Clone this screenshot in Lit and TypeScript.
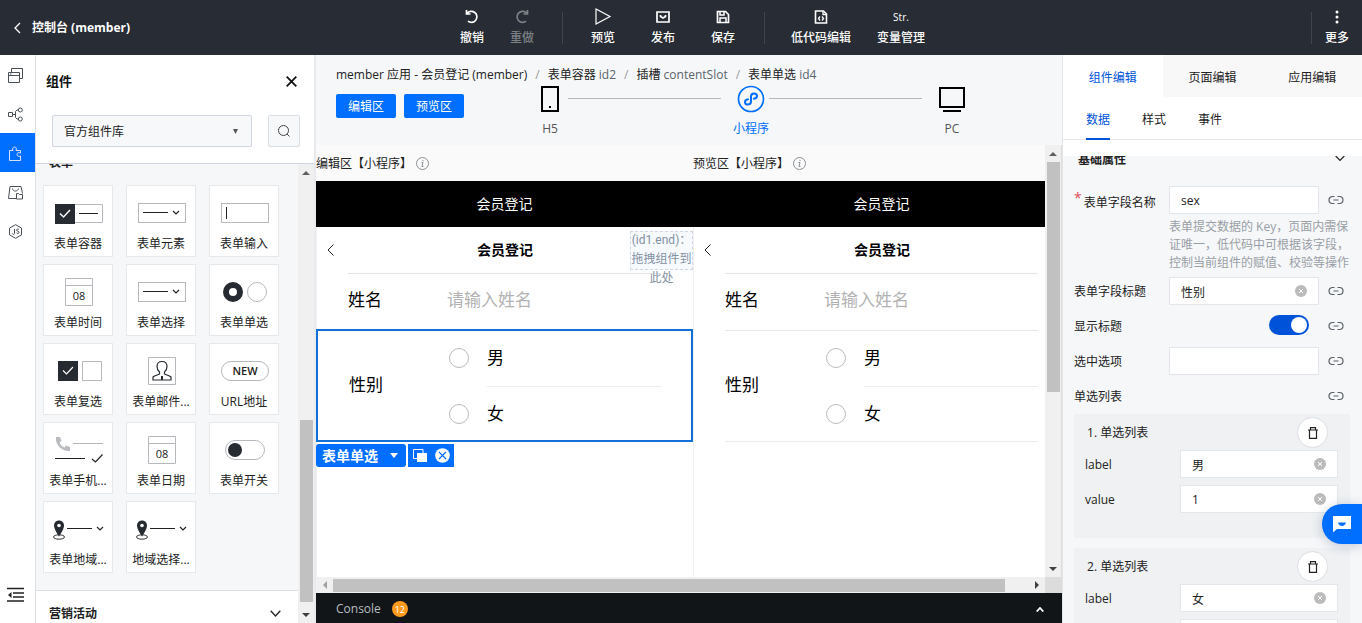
import { LitElement, html, svg, css, nothing } from "lit";
import { customElement, property } from "lit/decorators.js";
import { classMap } from "lit/directives/class-map.js";

const base = css`
  *,
  *::before,
  *::after {
    box-sizing: border-box;
  }
  button,
  input,
  select {
    font: inherit;
    color: inherit;
    margin: 0;
    padding: 0;
    border: 0;
    background: none;
    border-radius: 0;
    outline: 0;
  }
  a {
    color: inherit;
    text-decoration: none;
  }
  svg {
    display: block;
    flex: none;
  }
  h2,
  h3,
  p {
    margin: 0;
    font-size: inherit;
  }
`;

/* ---------- scroll track ---------- */

@customElement("scroll-track")
class ScrollTrack extends LitElement {
  @property() axis = "y";
  @property({ type: Number }) before = 0;
  @property({ type: Number }) thumb = 1;
  @property({ type: Number }) after = 0;

  static styles = css`
    :host {
      display: flex;
      background: #f0f0f0;
      flex-direction: column;
      width: 16px;
    }
    :host([axis="x"]) {
      flex-direction: row;
      width: auto;
      height: 16px;
    }
    .end {
      flex: 0 0 17px;
      display: grid;
      place-items: center;
    }
    .thumb {
      background: #c1c1c1;
      margin: 0 1px 0 2px;
    }
    :host([axis="x"]) .thumb {
      margin: 2px 0 1px;
    }
    svg {
      display: block;
    }
  `;

  render() {
    const y = this.axis === "y";
    return html`
      <div class="end">
        <svg width="8" height="8" fill=${y ? "#606060" : "#a0a0a0"}>
          <path d=${y ? "M0 6 4 2 8 6z" : "M6 0 2 4 6 8z"} />
        </svg>
      </div>
      <div style="flex:${this.before} 0 0"></div>
      <div class="thumb" style="flex:${this.thumb} 0 0"></div>
      <div style="flex:${this.after} 0 0"></div>
      <div class="end">
        <svg width="8" height="8" fill="#404040">
          <path d=${y ? "M0 2 4 6 8 2z" : "M2 0 6 4 2 8z"} />
        </svg>
      </div>
    `;
  }
}

/* ---------- top bar ---------- */

const line = (body: unknown, size = 16, width = 2) => html`
  <svg width=${size} height=${size} viewBox="0 0 ${size} ${size}" fill="none" stroke="currentColor" stroke-width=${width}>
    ${body}
  </svg>
`;

const undo = svg`<path d="M2.500 1v4h4M3 4.600A5.500 5.500 0 1 1 4 12.200" />`;
const redo = svg`<path d="M13.500 1v4h-4M13 4.600A5.500 5.500 0 1 0 12 12.200" />`;
const play = svg`<path d="M2 1v15l14-7.500z" />`;
const publish = svg`<path d="M2 3h12v10H2z" /><path d="M5.500 6v1.500L8 9l2.500-1.500V6" />`;
const save = svg`<path d="M2.500 2.500h8l3 3v8h-11z" /><path d="M5 2.500v3.500h4V2.500M5 13V9h6v4" stroke-width="1.500" />`;
const code = svg`<path d="M2.500 2h8l3 3v9h-11z" /><path d="M10 2v3.500h3.500M7 7.500 5.500 9.500 7 11.500M9 7.500l1.500 2L9 11.500" stroke-width="1.300" />`;

@customElement("top-bar")
class TopBar extends LitElement {
  static styles = [
    base,
    css`
      :host {
        display: flex;
        align-items: center;
        height: 55px;
        flex: none;
        background: #282c34;
        color: #fff;
      }
      .back {
        flex: 0 0 447px;
        display: flex;
        align-items: center;
        gap: 8px;
        padding-left: 12px;
        font-weight: 700;
      }
      .group {
        display: flex;
        align-items: center;
      }
      .tool {
        display: flex;
        flex-direction: column;
        align-items: center;
        gap: 3px;
        width: 60px;
        font-weight: 500;
        line-height: 18px;
      }
      .tool.slim {
        width: 50px;
      }
      .tool.wide {
        width: 80px;
      }
      .tool:disabled {
        color: #7d8085;
      }
      .icon {
        display: grid;
        place-items: center;
        height: 18px;
        font-size: 10px;
      }
      .rule {
        width: 1px;
        height: 32px;
        background: #40454d;
        margin: 0 10px 0 15px;
      }
      .rule.tail {
        margin: 0 16px 0 11px;
      }
      .more {
        margin-left: auto;
      }
      .more .rule {
        margin: 0;
      }
      .more .tool {
        width: 50px;
      }
    `,
  ];

  tool(icon: unknown, label: string, kind = "", disabled = false) {
    return html`
      <button class=${classMap({ tool: true, slim: kind === "slim", wide: kind === "wide" })} ?disabled=${disabled}>
        <span class="icon">${icon}</span><span>${label}</span>
      </button>
    `;
  }

  render() {
    return html`
      <a class="back" href="#">
        <svg width="12" height="12" fill="none" stroke="currentColor" stroke-width="1.300"><path d="M8 1 3 6l5 5" /></svg>
        控制台 (member)
      </a>
      <div class="group">
        ${this.tool(line(undo, 16, 1.7), "撤销", "slim")} ${this.tool(line(redo, 16, 1.7), "重做", "slim", true)}
        <span class="rule"></span>
        ${this.tool(line(play, 18, 1.2), "预览")} ${this.tool(line(publish, 16, 1.7), "发布")} ${this.tool(line(save, 16, 1.7), "保存")}
        <span class="rule tail"></span>
        ${this.tool(line(code, 16, 1.6), "低代码编辑", "wide")} ${this.tool("Str.", "变量管理", "wide")}
      </div>
      <div class="group more">
        <span class="rule"></span>
        ${this.tool(
          html`<svg width="4" height="14" fill="currentColor">
            <circle cx="2" cy="2" r="1.500" /><circle cx="2" cy="7" r="1.500" /><circle cx="2" cy="12" r="1.500" />
          </svg>`,
          "更多"
        )}
      </div>
    `;
  }
}

/* ---------- left rail ---------- */

const railIcons = [
  { name: "页面", art: svg`<path d="M.5 4.500h11v10H.5zM.5 7.500h11M3.500 4V.5h11v10H12M2 6h1.500" />` },
  { name: "流程", art: svg`<path d="M.5 5.500h4v4h-4zM4.500 7.500h3M10 3H9L7.500 4.500v6L9 12h1" /><circle cx="12.300" cy="3" r="2" /><circle cx="12.300" cy="12" r="2" />` },
  { name: "组件", art: svg`<path d="M1.500 4.500H5c-1-2 0-3.500 1.500-3.500S9 2.500 8 4.500h4.500V7c-2-1-3.500 0-3.500 1.500s1.500 2.500 3.500 1.500v4.500h-11z" />` },
  { name: "素材", art: svg`<path d="M2 1.500h11l1.500 7M2 1.500.5 13.500h8M4.500 3.500C5 7 9.500 7 10.500 3.500M8.500 8.500h2l1 1h3v4.500h-6z" />` },
  { name: "脚本", art: svg`<path d="M7.500.7l6 3.400v6.800l-6 3.400-6-3.400V4.100z" /><path d="M6.500 5v4.500c0 1.200-2 1.200-2.200 0M11 5.800c-.6-1.100-2.500-.9-2.500.3 0 1.400 2.600.8 2.600 2.300 0 1.300-2.200 1.400-2.700.2" />` },
];

@customElement("side-rail")
class SideRail extends LitElement {
  static styles = [
    base,
    css`
      :host {
        display: flex;
        flex-direction: column;
        width: 36px;
        flex: none;
        background: #fff;
        border-right: 1px solid #dcdfe3;
      }
      .item {
        display: flex;
        justify-content: center;
        height: 39px;
        padding: 13px 4px 0 0;
        color: #4a5058;
      }
      .item.active {
        background: #006eff;
        color: #cfe3ff;
      }
      .fold {
        margin-top: auto;
        padding: 0 4px 20px 0;
        display: flex;
        justify-content: center;
      }
    `,
  ];

  render() {
    return html`
      ${railIcons.map(
        (it, i) => html`
          <button class=${classMap({ item: true, active: i === 2 })} aria-label=${it.name}>${line(it.art, 15, 1)}</button>
        `
      )}
      <button class="fold" aria-label="收起">
        <svg width="17" height="16" stroke="#222" stroke-width="1.600" fill="none">
          <path d="M0 1.500h17M6 6h11M6 10h11M0 14h17" />
          <path d="M4.500 5v6L1 8z" fill="#222" stroke="none" />
        </svg>
      </button>
    `;
  }
}

/* ---------- component library ---------- */

const chevron = (x: number, y: number) =>
  svg`<path d="M${x - 3} ${y - 2}l3 3 3-3" fill="none" stroke="#222" stroke-width="1.200" />`;

const dropdown = svg`
  <rect x="3.500" y="6.500" width="47" height="19" fill="#fff" stroke="#b5b8bc" />
  <path d="M8 15.500h25" stroke="#222" />${chevron(41, 16)}`;

const calendar = svg`
  <path d="M13.500 2.500h27v27h-27zM13.500 9.500h27" fill="none" stroke="#b5b8bc" />
  <text x="27" y="24" text-anchor="middle" font-size="11" fill="#222">08</text>`;

const pin = svg`
  <ellipse cx="7" cy="24" rx="5.500" ry="2.200" fill="none" stroke="#333" />
  <path d="M7 7.500c-3 0-5 2.200-5 5C2 16.500 7 23.500 7 23.500s5-7 5-11c0-2.800-2-5-5-5z" fill="#262a31" />
  <circle cx="7" cy="12.500" r="1.800" fill="#fff" />
  <path d="M15 15.500h25" stroke="#222" />${chevron(48, 16)}`;

const cards = [
  {
    label: "表单容器",
    art: svg`<path d="M23 7.500h27.500v18H23" fill="none" stroke="#b5b8bc" /><path d="M3 7h20v20H3z" fill="#262a31" />
      <path d="M8 16.500l3.500 3.500 6.500-7" fill="none" stroke="#fff" stroke-width="1.400" /><path d="M27 16.500h19" stroke="#222" />`,
  },
  { label: "表单元素", art: dropdown },
  {
    label: "表单输入",
    art: svg`<rect x="3.500" y="6.500" width="47" height="19" fill="#fff" stroke="#b5b8bc" /><path d="M8.500 10v12" stroke="#222" />`,
  },
  { label: "表单时间", art: calendar },
  { label: "表单选择", art: dropdown },
  {
    label: "表单单选",
    art: svg`<circle cx="15" cy="16" r="7" fill="#fff" stroke="#262a31" stroke-width="6" /><circle cx="39" cy="16" r="9.500" fill="#fff" stroke="#b5b8bc" />`,
  },
  {
    label: "表单复选",
    art: svg`<path d="M6 6h20v20H6z" fill="#262a31" /><path d="M11 15.500l3.500 3.500 6.500-7" fill="none" stroke="#fff" stroke-width="1.200" />
      <path d="M30.500 6.500h19v19h-19z" fill="#fff" stroke="#b5b8bc" />`,
  },
  {
    label: "表单邮件...",
    art: svg`<path d="M13.500 2.500h27v27h-27z" fill="#fff" stroke="#b5b8bc" />
      <path d="M27 6.500c-3 0-5 2-5 5 0 2.500 1 4.300 2.500 5.500v2c-2 1-5 1.500-6.500 3v3h18v-3c-1.500-1.500-4.500-2-6.500-3v-2c1.500-1.200 2.500-3 2.500-5.500 0-3-2-5-5-5z" fill="none" stroke="#262a31" stroke-width="1.200" />
      <path d="M27 21v4" stroke="#262a31" stroke-width="2" />`,
  },
  {
    label: "URL地址",
    art: svg`<rect x="3.500" y="6.500" width="47" height="19" rx="9.500" fill="#fff" stroke="#b5b8bc" />
      <text x="27" y="20" text-anchor="middle" font-size="11" font-weight="600" fill="#222">NEW</text>`,
  },
  {
    label: "表单手机...",
    art: svg`<path d="M4 3h4l1.500 4-2 1.500c1 2.500 2.500 4 5 5l1.500-2 4 1.500v4C10 17.500 3 11 4 3z" fill="#b9bbbf" />
      <path d="M21 9.500h30" stroke="#b5b8bc" /><path d="M3 24.500h30" stroke="#222" /><path d="M40 25l3.500 3 7-7.500" fill="none" stroke="#222" stroke-width="1.200" />`,
  },
  { label: "表单日期", art: calendar },
  {
    label: "表单开关",
    art: svg`<rect x="7.500" y="6.500" width="39" height="19" rx="9.500" fill="#fff" stroke="#b5b8bc" /><circle cx="17" cy="16" r="7" fill="#262a31" />`,
  },
  { label: "表单地域...", art: pin },
  { label: "地域选择...", art: pin },
];

@customElement("component-library")
class ComponentLibrary extends LitElement {
  static styles = [
    base,
    css`
      :host {
        display: flex;
        flex-direction: column;
        width: 280px;
        flex: none;
        background: #fff;
        border-right: 2px solid #e8eaed;
        min-height: 0;
      }
      .head {
        display: flex;
        justify-content: space-between;
        align-items: center;
        padding: 15px 17px 0 10px;
        font-size: 13px;
        line-height: 22px;
        color: #111;
      }
      .filter {
        display: flex;
        justify-content: space-between;
        padding: 23px 14px 16px 16px;
      }
      .picker {
        position: relative;
        width: 200px;
      }
      .picker select {
        appearance: none;
        width: 100%;
        height: 32px;
        padding: 2px 11px 0;
        border: 1px solid #cfd5de;
        border-radius: 2px;
        background: #f7f8fa;
      }
      .picker svg {
        position: absolute;
        right: 14px;
        top: 14px;
        pointer-events: none;
      }
      .search {
        display: grid;
        place-items: center;
        width: 32px;
        height: 32px;
        border: 1px solid #d9dee5;
        border-radius: 2px;
        background: #f7f8fa;
      }
      .body {
        display: flex;
        flex: 1;
        min-height: 0;
        border-top: 1px solid #cfd5de;
        background: #f6f7f9;
      }
      .list {
        flex: 1;
        overflow: hidden;
      }
      .title {
        margin-top: -10px;
        padding-left: 13px;
        line-height: 18px;
      }
      .cards {
        display: grid;
        grid-template-columns: repeat(3, 70px);
        gap: 7px 13px;
        padding: 13px 7px 17px;
      }
      .card {
        display: flex;
        flex-direction: column;
        align-items: center;
        height: 72px;
        padding-top: 11px;
        background: #fff;
        border: 1px solid #e6e9ec;
        line-height: 20px;
        gap: 5px;
      }
      .next {
        display: flex;
        justify-content: space-between;
        align-items: center;
        height: 46px;
        width: 100%;
        padding: 0 17px 0 13px;
        border-top: 1px solid #dcdfe3;
        background: #fff;
        font-weight: 700;
      }
    `,
  ];

  render() {
    return html`
      <div class="head">
        <h2>组件</h2>
        <button aria-label="关闭">
          <svg width="11" height="11" stroke="#111" stroke-width="1.800"><path d="M.7.7l9.600 9.600M10.300.7.7 10.300" /></svg>
        </button>
      </div>
      <div class="filter">
        <div class="picker">
          <select aria-label="组件库">
            <option>官方组件库</option>
          </select>
          <svg width="5" height="5" fill="#555"><path d="M0 0h5L2.500 5z" /></svg>
        </div>
        <button class="search" aria-label="搜索">
          <svg width="12" height="12" fill="none" stroke="#444"><circle cx="5.500" cy="5.500" r="5" /><path d="M9 9l2.500 2.500" /></svg>
        </button>
      </div>
      <div class="body">
        <div class="list">
          <h3 class="title">表单</h3>
          <div class="cards">
            ${cards.map(
              (c) => html`
                <div class="card">
                  <svg width="52" height="32" viewBox="0 0 52 32">${c.art}</svg>
                  <span>${c.label}</span>
                </div>
              `
            )}
          </div>
          <button class="next">
            营销活动
            <svg width="11" height="7" fill="none" stroke="#222" stroke-width="1.300"><path d="M.7.7 5.500 6 10.300.7" /></svg>
          </button>
        </div>
        <scroll-track axis="y" .before=${239} .thumb=${182} .after=${4}></scroll-track>
      </div>
    `;
  }
}

/* ---------- mobile form ---------- */

@customElement("phone-form")
class PhoneForm extends LitElement {
  @property({ type: Boolean }) editing = false;
  @property() heading = "";

  static styles = [
    base,
    css`
      :host {
        display: flex;
        flex-direction: column;
        flex: 0 0 377px;
        color: #000;
        background: #fff;
      }
      .caption {
        display: flex;
        align-items: center;
        gap: 4px;
        height: 36px;
        padding-top: 1px;
        background: #fafafa;
        color: #222;
      }
      .bar {
        display: grid;
        place-items: center;
        height: 46px;
        background: #000;
        color: #fff;
        font-size: 14px;
      }
      .screen {
        position: relative;
        flex: 1;
        border-left: 1px solid #f0f0f0;
      }
      .nav {
        display: grid;
        grid-template-columns: 28px 1fr 28px;
        align-items: center;
        justify-items: center;
        height: 46px;
        font-size: 14px;
        font-weight: 700;
      }
      .field {
        display: grid;
        grid-template-columns: 99px 1fr;
        align-items: center;
        margin: 0 32px 0 31px;
        border-top: 1px solid #e5e5e5;
        font-size: 17px;
      }
      .name {
        height: 57px;
        padding-bottom: 4px;
      }
      .name input {
        width: 100%;
      }
      .name input::placeholder {
        color: #b2b2b2;
        opacity: 1;
      }
      .sex {
        height: 112px;
        border-bottom: 1px solid #ececec;
      }
      .sex > span {
        padding-bottom: 3px;
      }
      .option {
        display: flex;
        align-items: center;
        gap: 18px;
        height: 55px;
        padding-bottom: 2px;
      }
      .option input {
        appearance: none;
        width: 20px;
        height: 20px;
        margin-left: 2px;
        border: 1px solid #bbb;
        border-radius: 50%;
      }
      .split {
        height: 1px;
        margin-left: 40px;
        background: #ececec;
      }
      .editing .sex {
        grid-template-columns: 98px 1fr;
        height: 113px;
        margin: -1px 0 0 -1px;
        padding: 0 30px 0 31px;
        border: 2px solid #1171d8;
      }
      .slot {
        position: absolute;
        right: 0;
        top: 4px;
        width: 63px;
        height: 39px;
        border: 1px dashed #cfd8e3;
        background: #f7fafd;
        color: #8391a3;
        font-family: Roboto, "Noto Sans CJK SC", sans-serif;
        line-height: 19px;
        text-align: center;
      }
      .slot span {
        display: block;
        margin-top: -1px;
      }
      .actions {
        position: absolute;
        left: -1px;
        top: 217px;
        display: flex;
        gap: 2px;
        height: 23px;
        color: #fff;
      }
      .pick {
        display: flex;
        align-items: center;
        gap: 12px;
        padding: 0 8px 0 6px;
        background: #006eff;
        border-radius: 3px;
        font-size: 14px;
        font-weight: 700;
      }
      .ops {
        display: flex;
        align-items: center;
        gap: 8px;
        padding: 0 4px 0 5px;
        background: #006eff;
      }
    `,
  ];

  render() {
    return html`
      <div class="caption">
        ${this.heading}
        <svg width="13" height="13" fill="none" stroke="#8a9096">
          <circle cx="6.500" cy="6.500" r="6" />
          <path d="M5.500 5.500H7L6 9.500h1.500M7 3v1.200" />
        </svg>
      </div>
      <div class="bar">会员登记</div>
      <div class=${classMap({ screen: true, editing: this.editing })}>
        <div class="nav">
          <svg width="8" height="12" fill="none" stroke="#222"><path d="M6.500.5 1 6l5.500 5.500" /></svg>
          <span>会员登记</span>
        </div>
        <div class="field name">
          <label for="name">姓名</label>
          <input id="name" placeholder="请输入姓名" />
        </div>
        <div class="field sex" role="radiogroup" aria-label="性别">
          <span>性别</span>
          <div>
            <label class="option"><input type="radio" name="sex" />男</label>
            <div class="split"></div>
            <label class="option"><input type="radio" name="sex" />女</label>
          </div>
        </div>
        ${this.editing
          ? html`
              <div class="slot"><span>(id1.end)：拖拽组件到此处</span></div>
              <div class="actions">
                <button class="pick">
                  表单单选
                  <svg width="8" height="5" fill="#fff"><path d="M0 0h8L4 5z" /></svg>
                </button>
                <div class="ops">
                  <button aria-label="复制">
                    <svg width="14" height="14"><path d="M.5.500h9.500v9H.5z" fill="none" stroke="#fff" /><path d="M4 4h10v9H4z" fill="#fff" /></svg>
                  </button>
                  <button aria-label="删除">
                    <svg width="15" height="15"><circle cx="7.500" cy="7.500" r="7.300" fill="#fff" /><path d="M4 4l7 7M11 4l-7 7" stroke="#006eff" stroke-width="1.200" /></svg>
                  </button>
                </div>
              </div>
            `
          : nothing}
      </div>
    `;
  }
}

/* ---------- workspace ---------- */

@customElement("work-space")
class WorkSpace extends LitElement {
  static styles = [
    base,
    css`
      :host {
        display: flex;
        flex-direction: column;
        flex: 1;
        min-width: 0;
        background: #f6f7f9;
      }
      .crumbs {
        display: flex;
        gap: 8px;
        padding: 10px 20px 0;
        line-height: 20px;
        color: #222;
        white-space: nowrap;
      }
      .crumbs i {
        font-style: normal;
        color: #999;
      }
      .crumbs small {
        font-size: 12px;
        color: #5a646e;
      }
      .row {
        display: flex;
        gap: 8px;
        padding: 0 92px 7px 20px;
      }
      .blue {
        width: 60px;
        height: 24px;
        margin-top: 9px;
        padding-top: 1px;
        border-radius: 2px;
        background: #006eff;
        color: #fff;
      }
      .steps {
        flex: 1;
        display: flex;
        margin-left: 60px;
      }
      .step {
        display: flex;
        flex-direction: column;
        align-items: center;
        width: 36px;
        gap: 7px;
        line-height: 18px;
        white-space: nowrap;
        color: #555;
      }
      .step svg {
        height: 28px;
      }
      .step.on {
        color: #006eff;
      }
      .link {
        flex: 1;
        height: 1px;
        margin: 13px 12px 0 0;
        background: #b5b8bc;
      }
      .canvas {
        flex: 1;
        display: grid;
        grid-template: 1fr 16px / minmax(0, 1fr) 17px;
        min-height: 0;
        background: #dcdcdc;
      }
      .stage {
        display: flex;
        overflow: hidden;
        background: #fff;
      }
      .console {
        display: flex;
        align-items: center;
        gap: 11px;
        height: 30px;
        flex: none;
        padding: 2px 18px 0 20px;
        background: #121517;
        color: #b9bdc1;
      }
      .count {
        display: grid;
        place-items: center;
        width: 16px;
        height: 16px;
        border-radius: 50%;
        background: #ff9a1f;
        color: #fff;
        font-size: 9px;
      }
      .up {
        margin-left: auto;
      }
    `,
  ];

  render() {
    return html`
      <nav class="crumbs">
        <a href="#">member 应用 - 会员登记 (member)</a><i>/</i>
        <a href="#">表单容器 <small>id2</small></a><i>/</i>
        <a href="#">插槽 <small>contentSlot</small></a><i>/</i>
        <a href="#">表单单选 <small>id4</small></a>
      </nav>
      <div class="row">
        <button class="blue">编辑区</button>
        <button class="blue">预览区</button>
        <div class="steps">
          <button class="step">
            <svg width="18" viewBox="0 0 18 28"><path d="M1 2h16v24H1z" fill="none" stroke="#000" stroke-width="2" /><path d="M8 21h2v2H8z" /></svg>
            H5
          </button>
          <span class="link"></span>
          <button class="step on">
            <svg width="28" viewBox="0 0 28 28" fill="none" stroke="#006eff" stroke-width="2">
              <circle cx="14" cy="14" r="12.500" stroke-width="1.700" />
              <path d="M11 14.200c-2 .3-3 1.300-3 2.700 0 1.500 1.300 2.600 2.900 2.600 1.800 0 3.100-1.200 3.100-2.900v-5.200c0-1.700 1.300-2.900 3.100-2.900 1.600 0 2.900 1.100 2.900 2.600 0 1.400-1 2.400-3 2.700" stroke-linecap="round" />
            </svg>
            小程序
          </button>
          <span class="link"></span>
          <button class="step">
            <svg width="26" viewBox="0 0 26 28" fill="none" stroke="#000" stroke-width="2"><path d="M1 3h24v19H1zM4 26h18" /></svg>
            PC
          </button>
        </div>
      </div>
      <div class="canvas">
        <div class="stage">
          <phone-form editing heading="编辑区【小程序】"></phone-form>
          <phone-form heading="预览区【小程序】"></phone-form>
        </div>
        <scroll-track axis="y" .before=${0} .thumb=${230} .after=${168}></scroll-track>
        <scroll-track axis="x" .before=${0} .thumb=${672} .after=${23}></scroll-track>
      </div>
      <div class="console">
        Console <span class="count">12</span>
        <button class="up" aria-label="展开">
          <svg width="8" height="5" fill="none" stroke="#fff" stroke-width="1.800"><path d="M.7 4.500 4 1l3.300 3.500" /></svg>
        </button>
      </div>
    `;
  }
}

/* ---------- property panel ---------- */

@customElement("property-panel")
class PropertyPanel extends LitElement {
  static styles = [
    base,
    css`
      :host {
        display: flex;
        flex-direction: column;
        width: 300px;
        flex: none;
        background: #fff;
        border-left: 1px solid #e3e5e8;
        color: #222;
      }
      .tabs {
        display: flex;
        flex: none;
        height: 42px;
      }
      .tabs button {
        flex: 1;
        background: #f8f8f9;
        padding-top: 3px;
      }
      .tabs .on {
        background: #fff;
      }
      .on {
        color: #0052d9;
      }
      .subtabs {
        display: flex;
        flex: none;
        gap: 32px;
        height: 43px;
        padding-left: 23px;
        border-bottom: 1px solid #e5e8eb;
      }
      .subtabs button {
        height: 43px;
        padding-top: 4px;
        border-bottom: 2px solid transparent;
      }
      .subtabs .on {
        border-color: #0052d9;
      }
      .body {
        flex: 1;
        min-height: 0;
        overflow: hidden;
        margin-top: 16px;
        padding: 0 12px 0 11px;
        background: #f6f7f9;
      }
      .section {
        display: flex;
        justify-content: space-between;
        align-items: center;
        height: 18px;
        margin: -5px 5px 15px 4px;
      }
      .section svg {
        margin-bottom: 3px;
      }
      .item {
        display: grid;
        grid-template-columns: 95px 150px 1fr;
        align-items: center;
        min-height: 28px;
        margin-bottom: 7px;
      }
      .item > svg {
        justify-self: center;
        margin-left: 3px;
      }
      label,
      .item > span {
        padding-top: 1px;
      }
      .req {
        display: flex;
        align-items: center;
        gap: 2px;
        padding-top: 5px;
        white-space: nowrap;
      }
      .req::before {
        content: "*";
        align-self: flex-start;
        color: #e34d59;
        margin-top: -5px;
        font-size: 14px;
      }
      .item.named {
        margin-bottom: 4px;
        padding-top: 2px;
      }
      .help {
        margin: 0 0 5px 95px;
        line-height: 18px;
        color: #999fa6;
        white-space: nowrap;
      }
      .box {
        position: relative;
        display: flex;
        align-items: center;
        height: 28px;
        background: #fff;
        border: 1px solid #e3e6ea;
      }
      .box input {
        flex: 1;
        min-width: 0;
        height: 26px;
        padding: 1px 0 0 11px;
      }
      .clear {
        padding-right: 11px;
      }
      .switch {
        appearance: none;
        justify-self: end;
        width: 40px;
        height: 20px;
        margin: 0 10px 3px 0;
        padding: 2px;
        border-radius: 10px;
        background: #0052d9;
      }
      .switch::before {
        content: "";
        display: block;
        width: 16px;
        height: 16px;
        margin-left: auto;
        border-radius: 50%;
        background: #fff;
      }
      .entry {
        height: 124px;
        margin-bottom: 10px;
        padding: 3px 12px 0 11px;
        background: #eff1f3;
      }
      .top {
        display: flex;
        justify-content: space-between;
        align-items: center;
        padding: 0 10px 0 2px;
        margin-bottom: 2px;
      }
      .trash {
        display: grid;
        place-items: center;
        width: 31px;
        height: 31px;
        border: 1px solid #dcdfe3;
        border-radius: 50%;
        background: #fff;
      }
      .pair {
        display: grid;
        grid-template-columns: 95px minmax(0, 1fr);
        align-items: center;
        margin-bottom: 7px;
      }
      .list {
        margin-bottom: 4px;
      }
    `,
  ];

  link = html`
    <svg width="16" height="10" fill="none" stroke="#5a6068" stroke-width="1.200">
      <path d="M6.500 1.500h-2a3.500 3.500 0 0 0 0 7h2M9.500 1.500h2a3.500 3.500 0 0 1 0 7h-2M5.500 5h5" />
    </svg>
  `;

  box(id: string, value: string, clear = true) {
    return html`
      <div class="box">
        <input id=${id} .value=${value} />
        ${clear
          ? html`<button class="clear" aria-label="清除">
              <svg width="12" height="12"><circle cx="6" cy="6" r="6" fill="#bbb" /><path d="M4 4l4 4M8 4 4 8" stroke="#fff" /></svg>
            </button>`
          : nothing}
      </div>
    `;
  }

  entry(n: number, label: string) {
    return html`
      <div class="entry">
        <div class="top">
          <span>${n}. 单选列表</span>
          <button class="trash" aria-label="删除">
            <svg width="10" height="12" fill="none" stroke="#222" stroke-width="1.200"><path d="M0 3h10M2.500 2.500V.7h5v1.800M1.500 3v8.300h7V3" /></svg>
          </button>
        </div>
        <div class="pair"><label for="label${n}">label</label>${this.box("label" + n, label)}</div>
        <div class="pair"><label for="value${n}">value</label>${this.box("value" + n, String(n))}</div>
      </div>
    `;
  }

  render() {
    return html`
      <div class="tabs"><button class="on">组件编辑</button><button>页面编辑</button><button>应用编辑</button></div>
      <div class="subtabs"><button class="on">数据</button><button>样式</button><button>事件</button></div>
      <div class="body">
        <div class="section">
          <h3>基础属性</h3>
          <svg width="10" height="7" fill="none" stroke="#222" stroke-width="1.200"><path d="M.7 1 5 5.500 9.300 1" /></svg>
        </div>
        <div class="item named"><label class="req" for="field">表单字段名称</label>${this.box("field", "sex", false)}${this.link}</div>
        <p class="help">表单提交数据的 Key，页面内需保<br />证唯一，低代码中可根据该字段，<br />控制当前组件的赋值、校验等操作</p>
        <div class="item"><label for="title">表单字段标题</label>${this.box("title", "性别")}${this.link}</div>
        <div class="item"><label for="show">显示标题</label><input class="switch" id="show" type="checkbox" checked />${this.link}</div>
        <div class="item"><label for="chosen">选中选项</label>${this.box("chosen", "", false)}${this.link}</div>
        <div class="item list"><span>单选列表</span><span></span>${this.link}</div>
        ${this.entry(1, "男")} ${this.entry(2, "女")}
      </div>
    `;
  }
}

/* ---------- application ---------- */

@customElement("app-root")
class AppRoot extends LitElement {
  static styles = [
    base,
    css`
      :host {
        display: flex;
        flex-direction: column;
        height: 100vh;
        overflow: hidden;
        font: 12px/18px "Open Sans", "Noto Sans CJK SC", sans-serif;
        color: #222;
      }
      .main {
        flex: 1;
        display: flex;
        min-height: 0;
      }
      .chat {
        position: fixed;
        right: 0;
        bottom: 79px;
        display: grid;
        place-items: center;
        width: 40px;
        height: 40px;
        border-radius: 20px 0 0 20px;
        background: #006eff;
        box-shadow: 0 2px 12px rgba(30, 60, 110, 0.25);
      }
    `,
  ];

  render() {
    return html`
      <top-bar></top-bar>
      <div class="main">
        <side-rail></side-rail>
        <component-library></component-library>
        <work-space></work-space>
        <property-panel></property-panel>
      </div>
      <button class="chat" aria-label="客服">
        <svg width="18" height="18">
          <path d="M0 1h18v13H4l-4 3.500z" fill="#fff" />
          <path d="M5 7.500h8c-.5 2-2 3.500-4 3.500s-3.500-1.500-4-3.500z" fill="#006eff" />
        </svg>
      </button>
    `;
  }
}
